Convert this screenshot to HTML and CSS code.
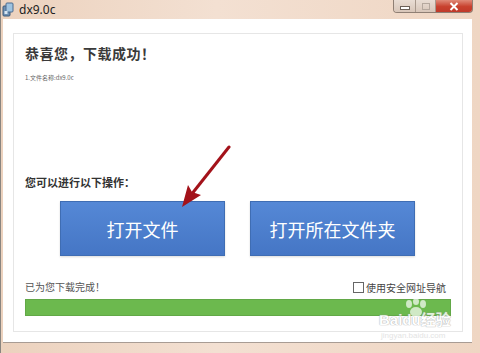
FILE: index.html
```html
<!DOCTYPE html>
<html lang="zh">
<head>
<meta charset="utf-8">
<title>dx9.0c</title>
<link rel="stylesheet" href="styles.css">
</head>
<body>
<div class="window">
  <div class="titlebar">
    <span class="app-icon">
      <svg width="12" height="15" viewBox="0 0 12 15">
        <rect x="1" y="4" width="7" height="10" rx="1" fill="#6d8fb3" stroke="#3d5a7a" stroke-width="1"/>
        <rect x="4" y="1" width="7" height="9" rx="1" fill="#9fc3e0" stroke="#4a6b8f" stroke-width="1"/>
        <rect x="2.5" y="9" width="3" height="3" fill="#d8e6f2"/>
      </svg>
    </span>
    <span class="title">dx9.0c</span>
    <div class="controls">
      <span class="ctl ctl-min"><i></i></span>
      <span class="ctl ctl-max"><i></i></span>
      <span class="ctl ctl-close">
        <svg width="10" height="9" viewBox="0 0 10 9"><path d="M1.5 1 L8.5 8 M8.5 1 L1.5 8" stroke="#fff" stroke-width="2"/></svg>
      </span>
    </div>
  </div>
  <div class="client">
    <div class="panel">
      <h1 class="heading">恭喜您，下载成功！</h1>
      <p class="fileinfo">1.文件名称:dx9.0c</p>
      <p class="label">您可以进行以下操作：</p>
      <div class="actions">
        <button class="btn">打开文件</button>
        <button class="btn">打开所在文件夹</button>
      </div>
      <div class="status">
        <span class="done">已为您下载完成！</span>
        <label class="check"><span class="box"></span>使用安全网址导航</label>
      </div>
      <div class="progress"></div>
    </div>
  </div>
  <svg class="arrow" width="60" height="70" viewBox="0 0 60 70">
    <path d="M50 2 L12 50" stroke="#a3121a" stroke-width="3" stroke-linecap="round" fill="none"/>
    <path d="M3 62 L9 40 L13 47 L22 50 Z" fill="#a3121a"/>
  </svg>
  <div class="watermark">
    <svg class="paw" width="26" height="20" viewBox="0 0 26 20">
      <ellipse cx="6" cy="6" rx="3" ry="4" fill="#fff" opacity=".85"/>
      <ellipse cx="13" cy="3.5" rx="3" ry="3.5" fill="#fff" opacity=".85"/>
      <ellipse cx="20" cy="6" rx="3" ry="4" fill="#fff" opacity=".85"/>
      <ellipse cx="13" cy="14" rx="6" ry="5" fill="#fff" opacity=".85"/>
    </svg>
    <span class="wm-text">Baidu经验</span>
    <span class="wm-url">jingyan.baidu.com</span>
  </div>
</div>
</body>
</html>
```
FILE: styles.css
```css
html, body {
  margin: 0;
  padding: 0;
}
body {
  width: 480px;
  height: 353px;
  overflow: hidden;
  font-family: "Noto Sans CJK SC", "Noto Sans", sans-serif;
}
.window {
  position: relative;
  width: 480px;
  height: 353px;
  display: flex;
  flex-direction: column;
  background: linear-gradient(90deg, #ecd2be 0%, #f3e0d2 45%, #efd6c3 100%);
  box-sizing: border-box;
  border-left: 1px solid #8a8580;
}
.titlebar {
  height: 19px;
  display: flex;
  align-items: center;
  position: relative;
}
.app-icon {
  width: 14px;
  height: 16px;
  margin-left: 1px;
  display: flex;
  align-items: center;
}
.title {
  margin-left: 3px;
  font-family: "Noto Sans", "DejaVu Sans", sans-serif;
  font-size: 12px;
  color: #222;
  line-height: 16px;
}
.controls {
  position: absolute;
  top: 0;
  right: 7px;
  display: flex;
  height: 12px;
  border: 1px solid #8f7f74;
  border-top: none;
  border-radius: 0 0 4px 4px;
  overflow: hidden;
}
.ctl {
  height: 12px;
  display: flex;
  align-items: center;
  justify-content: center;
  background: linear-gradient(#e9ddd4, #d8c6b9);
}
.ctl-min {
  width: 21px;
  border-right: 1px solid #a8988c;
}
.ctl-min i {
  display: block;
  width: 8px;
  height: 2px;
  margin-top: 3px;
  background: #fff;
  border: 1px solid #6b6058;
}
.ctl-max {
  width: 19px;
  border-right: 1px solid #a8988c;
}
.ctl-max i {
  display: block;
  width: 6px;
  height: 5px;
  border: 1px solid #b5a89e;
}
.ctl-close {
  width: 36px;
  background: linear-gradient(#e08a78, #c8412e 55%, #c03a2a);
}
.client {
  flex: 1;
  margin: 0 8px 10px 2px;
  background: #fff;
  border-bottom: 1px solid #a89c94;
  padding: 14px 9px 10px 10px;
  display: flex;
}
.panel {
  flex: 1;
  border: 1px solid #e6e6e6;
  padding: 9px 11px 0 11px;
  display: flex;
  flex-direction: column;
}
.heading {
  margin: 0;
  font-size: 14px;
  line-height: 20px;
  font-weight: bold;
  color: #3a3a3a;
  letter-spacing: 0.5px;
}
.fileinfo {
  margin: 10px 0 0 0;
  font-size: 6px;
  line-height: 10px;
  color: #666;
}
.label {
  margin: 91px 0 0 0;
  font-size: 11px;
  line-height: 16px;
  font-weight: bold;
  color: #333;
}
.actions {
  margin-top: 11px;
  margin-left: 35px;
  display: flex;
  gap: 25px;
}
.btn {
  width: 165px;
  height: 55px;
  border: 1px solid #3f6db3;
  background: linear-gradient(#5588d6, #4576c5);
  color: #fff;
  font-family: "Noto Sans CJK SC", sans-serif;
  font-size: 18px;
  padding: 0;
  margin: 0;
  box-shadow: 0 1px 2px rgba(0,0,0,0.15);
}
.status {
  margin-top: 24px;
  height: 14px;
  display: flex;
  justify-content: space-between;
  align-items: center;
}
.done {
  font-size: 10px;
  color: #555;
  line-height: 14px;
}
.check {
  display: flex;
  align-items: center;
  font-size: 10px;
  color: #444;
  margin-right: 5px;
}
.box {
  width: 9px;
  height: 9px;
  border: 1px solid #666;
  background: #fff;
  margin-right: 2px;
}
.progress {
  margin-top: 5px;
  height: 15px;
  background: #6cb94e;
  border: 1px solid #62a847;
}
.arrow {
  position: absolute;
  left: 178px;
  top: 145px;
}
.watermark {
  position: absolute;
  left: 376px;
  top: 298px;
  width: 86px;
  height: 45px;
  opacity: 0.8;
  white-space: nowrap;
}
.paw {
  position: absolute;
  left: 26px;
  top: 0;
}
.wm-text {
  position: absolute;
  left: 2px;
  top: 13px;
  font-family: "Liberation Sans", "Noto Sans CJK SC", sans-serif;
  font-size: 15px;
  line-height: 18px;
  font-weight: bold;
  color: #fff;
  text-shadow: 0 0 1px #999, 0 0 1px #999;
  white-space: nowrap;
}
.wm-url {
  position: absolute;
  left: 4px;
  top: 33px;
  font-family: "Liberation Sans", sans-serif;
  font-size: 8px;
  line-height: 10px;
  color: #ddd;
  white-space: nowrap;
}
```
